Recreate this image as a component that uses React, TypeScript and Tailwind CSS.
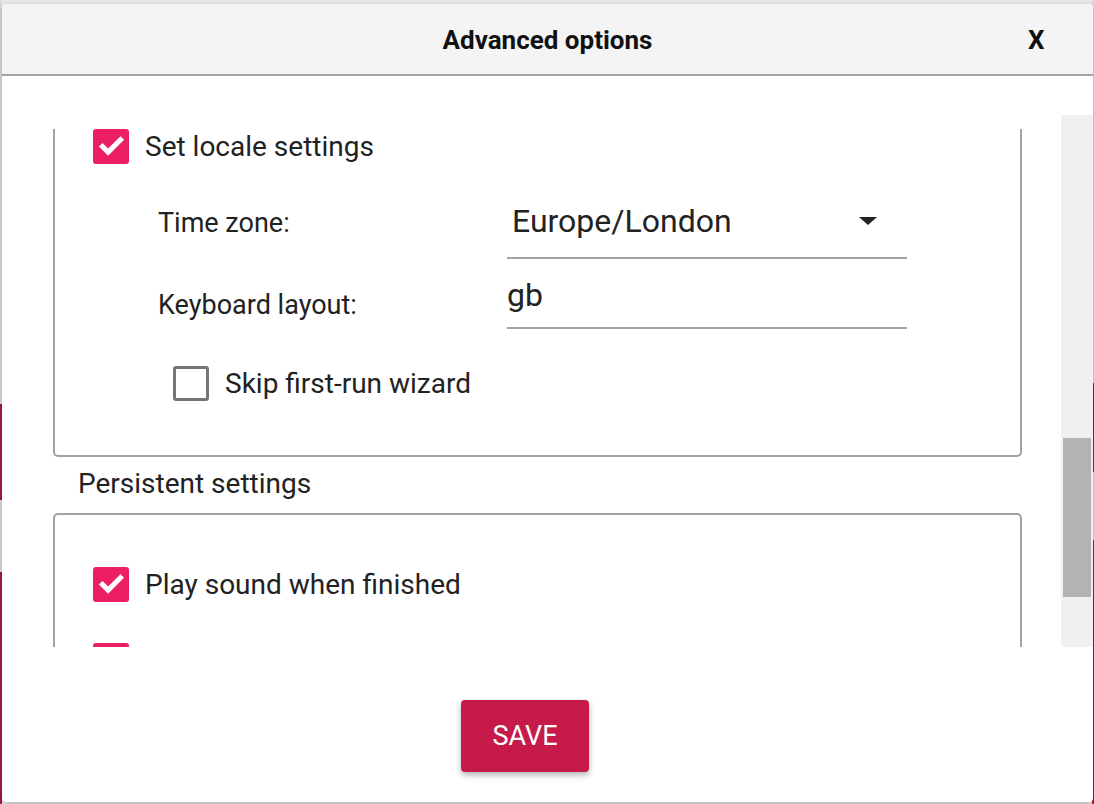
import { Check } from "lucide-react";

function Checkbox({ checked }: { checked: boolean }) {
  return checked ? (
    <span className="flex h-[35px] w-[36px] shrink-0 items-center justify-center rounded-[3px] bg-[#ec1f63]">
      <Check className="h-[27px] w-[27px] text-white" strokeWidth={4.5} strokeLinecap="square" strokeLinejoin="miter" />
    </span>
  ) : (
    <span className="h-[35px] w-[36px] shrink-0 rounded-[3px] border-[3px] border-[#767676] bg-white" />
  );
}

function CheckRow({ checked, label, className }: { checked: boolean; label?: string; className: string }) {
  return (
    <div className={`flex h-[35px] items-center ${className}`}>
      <Checkbox checked={checked} />
      {label && <span className="ml-[16px] whitespace-nowrap text-[28px] leading-[32px] text-[#222]">{label}</span>}
    </div>
  );
}

export default function App() {
  return (
    <div className="relative h-[804px] w-[1094px] overflow-hidden bg-[#e8e8e8] font-['Roboto',sans-serif]">
      {/* page behind the dialog */}
      <div className="flex h-full justify-between">
        <div className="flex w-[2px] flex-col">
          <div className="h-[404px] bg-[#dcdcdc]" />
          <div className="h-[96px] bg-[#a8174a]" />
          <div className="h-[72px] bg-[#dcdcdc]" />
          <div className="flex-1 bg-[#a8174a]" />
        </div>
        <div className="flex w-[2px] flex-col">
          <div className="h-[383px] bg-[#dcdcdc]" />
          <div className="h-[89px] bg-[#a8174a]" />
          <div className="h-[68px] bg-[#dcdcdc]" />
          <div className="flex-1 bg-[#a8174a]" />
        </div>
      </div>

      <div className="absolute left-[2px] top-[4px] flex h-[798px] w-[1091px] flex-col overflow-hidden rounded-[4px] bg-white shadow-[0_2px_6px_rgba(0,0,0,0.25)]">
        <div className="flex h-[72px] shrink-0 items-center border-b-2 border-[#a3a3a3] bg-[#f4f4f4] pt-[2px]">
          <div className="w-[65px]" />
          <div className="flex-1 text-center text-[26px] font-bold text-[#111]">Advanced options</div>
          <div className="w-[65px] text-[26px] font-bold text-[#111]">X</div>
        </div>

        <div className="mt-[39px] flex h-[532px] shrink-0">
          <div className="flex-1 overflow-hidden pl-[51px]">
            <div className="w-[969px] rounded-b-[5px] border-x-2 border-b-2 border-[#a3a3a3]">
              <CheckRow checked label="Set locale settings" className="ml-[38px] mt-[14px]" />

              <div className="ml-[103px] mt-[35px] flex">
                <div className="flex h-[60px] w-[349px] items-center pb-[12px] text-[27px] text-[#222]">Time zone:</div>
                <div className="flex h-[60px] w-[400px] items-center justify-between border-b-2 border-[#a3a3a3] pb-[14px] pl-[5px] pr-[30px]">
                  <span className="text-[32px] text-[#222]">Europe/London</span>
                  <svg width="18" height="8" viewBox="0 0 18 8">
                    <path d="M0 0 L18 0 L9 8 Z" fill="#222" />
                  </svg>
                </div>
              </div>

              <div className="ml-[103px] mt-[10px] flex">
                <div className="flex h-[60px] w-[349px] items-center pt-[12px] text-[27px] text-[#222]">Keyboard layout:</div>
                <div className="flex h-[60px] w-[400px] items-center border-b-2 border-[#a3a3a3] pb-[6px]">
                  <span className="text-[32px] text-[#222]">gb</span>
                </div>
              </div>

              <CheckRow checked={false} label="Skip first-run wizard" className="ml-[118px] mt-[37px] mb-[54px]" />
            </div>

            <div className="ml-[25px] mt-[11px] text-[28px] leading-[32px] text-[#222]">Persistent settings</div>

            <div className="mt-[13px] h-[200px] w-[969px] rounded-t-[5px] border-x-2 border-t-2 border-[#a3a3a3]">
              <CheckRow checked label="Play sound when finished" className="ml-[38px] mt-[52px]" />
              <CheckRow checked className="ml-[38px] mt-[41px]" />
            </div>
          </div>

          <div className="w-[32px] shrink-0 bg-[#f0f0f0] px-[2px] pt-[323px]">
            <div className="h-[159px] bg-[#b3b3b3]" />
          </div>
        </div>

        <div className="pl-[459px] pt-[53px]">
          <button className="flex h-[72px] w-[128px] items-center justify-center rounded-[4px] bg-[#c51a4a] text-[27px] text-white shadow-[0_3px_6px_rgba(0,0,0,0.3)]">
            SAVE
          </button>
        </div>
      </div>
    </div>
  );
}
